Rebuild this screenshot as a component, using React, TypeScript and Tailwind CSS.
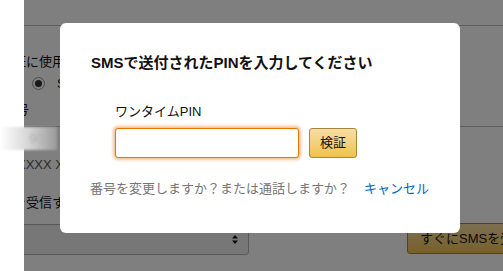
import React from "react";

const font = "font-['Liberation_Sans','Noto_Sans_CJK_JP',sans-serif]";

function SelectArrows() {
  return (
    <svg width="6" height="9" viewBox="0 0 6 9" className="block">
      <path d="M3 0 L6 3.5 L0 3.5 Z" fill="#111" />
      <path d="M3 9 L6 5.5 L0 5.5 Z" fill="#111" />
    </svg>
  );
}

export default function App() {
  return (
    <div className={`relative w-[503px] h-[271px] overflow-hidden bg-white ${font} text-[13px] text-[#111]`}>
      <div className="flex h-full">
        <div className="w-[24px] shrink-0 bg-white" />
        <div className="relative flex-1 overflow-hidden">
          {/* underlying page, in root coordinates */}
          <div className="-ml-[24px] w-[560px] flex flex-col">
            <div className="h-[26px] border-b border-[#bbb]" />
            <div className="mt-[27px] h-[18px] leading-[18px] whitespace-nowrap">認証に使用する方法を選択</div>
            <div className="mt-[6px] flex items-center h-[13px]">
              <div className="ml-[32px] w-[13px] h-[13px] shrink-0 rounded-full border border-[#999] bg-white flex items-center justify-center">
                <div className="w-[7px] h-[7px] rounded-full bg-[#333]" />
              </div>
              <span className="ml-[12px] leading-[13px]">SMS</span>
            </div>
            <div className="mt-[11px] h-[18px] leading-[18px] pl-[3px]">番号</div>
            <div className="mt-[7px] h-[25px] border-t border-[#bbb]" />
            <div className="mt-[5px] h-[18px] leading-[18px] pl-[17px] text-[#555] whitespace-nowrap">XXXX XXXX</div>
            <div className="mt-[20px] h-[18px] leading-[18px] pl-[13px] whitespace-nowrap">を受信する電話番号</div>
            <div className="mt-[12px] flex items-start">
              <div className="w-[249px] shrink-0 h-[31px] rounded-[3px] border border-[#adb1b8] bg-[#eeeff1] flex items-center justify-end pr-[10px]">
                <SelectArrows />
              </div>
              <div className="ml-[158px] shrink-0 -mt-[1px] w-[140px] h-[31px] rounded-[3px] border border-[#a88734] bg-gradient-to-b from-[#f7dfa5] to-[#f0c14b] pl-[12px] flex items-center whitespace-nowrap">
                すぐにSMSを受信
              </div>
            </div>
          </div>
          <div className="absolute inset-0 bg-black/50" />
        </div>
      </div>

      {/* blurred redaction */}
      <div className="absolute left-0 top-[127px] w-[57px] h-[23px] bg-gradient-to-r from-[#ffffff] via-[#d6d6d6] to-[#9a9a9a] blur-[1px]">
        <span className="absolute left-[29px] top-[3px] text-[13px] leading-[17px] text-[#b4b4b4] blur-[0.6px]">90</span>
      </div>

      {/* modal */}
      <div className="absolute left-[60px] top-[23px] w-[400px] h-[210px] rounded-[6px] bg-white px-[30px] pt-[30px]">
        <div className="pl-[1px] text-[15px] font-bold leading-[20px] whitespace-nowrap text-[#111]">
          SMSで送付されたPINを入力してください
        </div>
        <div className="ml-[25px] mt-[30px] h-[18px] leading-[18px] text-[13px] text-[#111]">ワンタイムPIN</div>
        <div className="ml-[25px] mt-[7px] flex items-center gap-[10px]">
          <div className="w-[184px] h-[30px] rounded-[3px] border border-[#e77600] bg-white shadow-[0_0_3px_2px_rgba(228,121,17,0.45)]" />
          <div className="w-[48px] h-[30px] rounded-[3px] border border-[#a88734] bg-gradient-to-b from-[#f7dfa5] to-[#f0c14b] flex items-center justify-center text-[13px] text-[#111]">
            検証
          </div>
        </div>
        <div className="mt-[22px] flex items-center h-[18px] leading-[18px] text-[13px] whitespace-nowrap">
          <span className="text-[#767676]">番号を変更しますか？または通話しますか？</span>
          <span className="ml-[14px] text-[#0066c0]">キャンセル</span>
        </div>
      </div>
    </div>
  );
}
